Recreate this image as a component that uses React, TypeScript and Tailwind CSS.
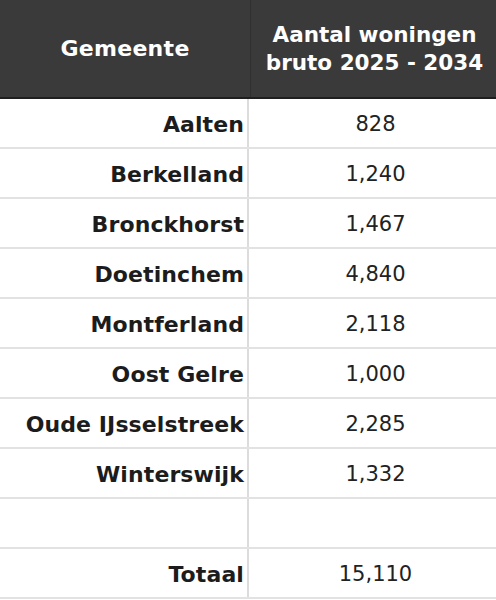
import React from "react";

const rows: [string, string][] = [
  ["Aalten", "828"],
  ["Berkelland", "1,240"],
  ["Bronckhorst", "1,467"],
  ["Doetinchem", "4,840"],
  ["Montferland", "2,118"],
  ["Oost Gelre", "1,000"],
  ["Oude IJsselstreek", "2,285"],
  ["Winterswijk", "1,332"],
  ["", ""],
  ["Totaal", "15,110"],
];

export default function App() {
  return (
    <div className="w-[496px] h-[600px] bg-white overflow-hidden" style={{ fontFamily: '"DejaVu Sans", "Open Sans", sans-serif' }}>
      <div className="flex h-[99px] bg-[#3a3a3a] border-b-2 border-[#1f1f1f] text-white font-bold">
        <div className="w-[251px] flex items-center justify-center border-r border-[#303030] text-[22px] tracking-[0.3px]">Gemeente</div>
        <div className="flex-1 flex flex-col items-center justify-center text-[21.5px] leading-[28px] pt-[1px] pl-[2px]">
          <span>Aantal woningen</span>
          <span>bruto 2025 - 2034</span>
        </div>
      </div>
      {rows.map(([name, val], i) => (
        <div key={i} className="flex h-[50px] border-b-2 border-[#e2e2e2]">
          <div className="w-[249px] flex items-center justify-end pr-[3px] pt-[3px] border-r-2 border-[#dcdcdc] text-[22px] font-bold text-[#1c1c1c] tracking-[0.1px]">{name}</div>
          <div className="flex-1 flex items-center justify-center text-[21px] text-[#222] pl-[6px] pt-[3px]">{val}</div>
        </div>
      ))}
    </div>
  );
}
